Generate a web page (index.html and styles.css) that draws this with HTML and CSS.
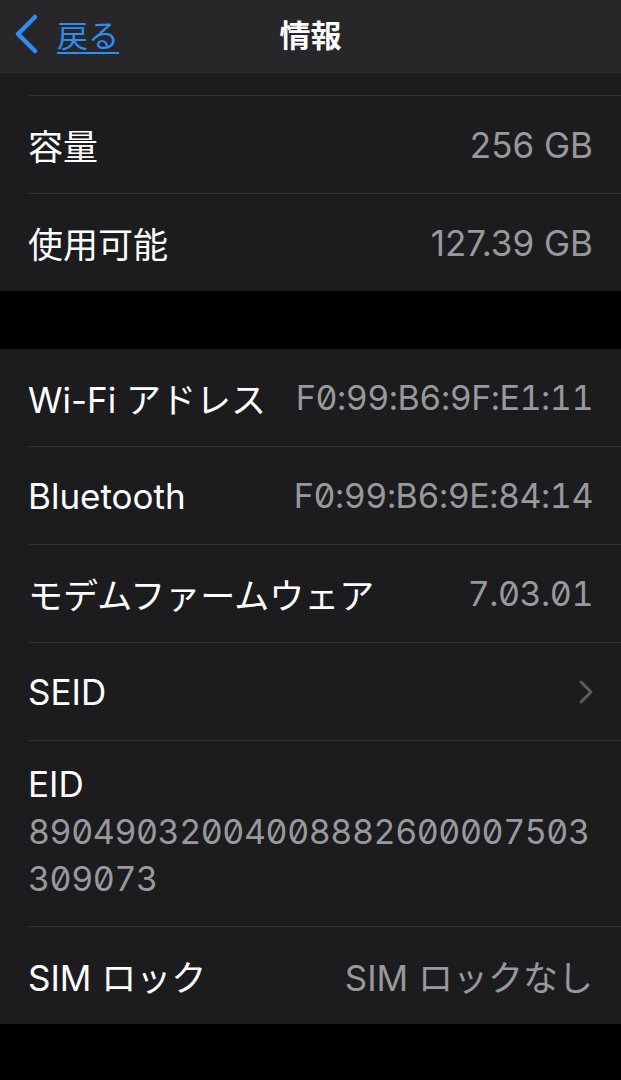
FILE: index.html
```html
<!DOCTYPE html>
<html lang="ja">
  <head>
    <meta charset="UTF-8" />
    <meta name="viewport" content="width=device-width, initial-scale=1.0" />
    <title>情報</title>
    <link rel="stylesheet" href="styles.css">
  </head>
  <body>
    <!-- Navigation bar -->
    <header class="navbar">
      <a class="back" href="#">
        <svg class="back-icon" width="26" height="40" viewBox="0 0 26 40">
          <path d="M21 3 L4 20 L21 37" fill="none" stroke="#2f8cf0" stroke-width="4.5" stroke-linecap="round" stroke-linejoin="round" />
        </svg>
        <span class="back-label">戻る</span>
      </a>
      <h1 class="title">情報</h1>
    </header>

    <!-- Storage -->
    <section class="group">
      <div class="row-cut"></div>
      <div class="row">
        <span class="label">容量</span>
        <span class="value">256 GB</span>
      </div>
      <div class="row">
        <span class="label">使用可能</span>
        <span class="value">127.39 GB</span>
      </div>
    </section>

    <!-- Network / hardware -->
    <section class="group">
      <div class="row">
        <span class="label">Wi-Fi アドレス</span>
        <span class="value mono">F0:99:B6:9F:E1:11</span>
      </div>
      <div class="row">
        <span class="label">Bluetooth</span>
        <span class="value mono">F0:99:B6:9E:84:14</span>
      </div>
      <div class="row">
        <span class="label">モデムファームウェア</span>
        <span class="value mono">7.03.01</span>
      </div>
      <div class="row">
        <span class="label">SEID</span>
        <svg class="disclosure" width="16" height="26" viewBox="0 0 16 26">
          <path d="M3 3 L13 13 L3 23" fill="none" stroke="#5c5c60" stroke-width="3" stroke-linecap="round" stroke-linejoin="round" />
        </svg>
      </div>
      <div class="row row-stack">
        <span class="label">EID</span>
        <span class="value mono">89049032004008882600007503<br />309073</span>
      </div>
      <div class="row">
        <span class="label">SIM ロック</span>
        <span class="value">SIM ロックなし</span>
      </div>
    </section>
  </body>
</html>
```

FILE: styles.css
```css
body {
  margin: 0;
  padding: 0;
  background-color: #000;
  color: #fff;
  font-family: Inter, "Noto Sans CJK JP", sans-serif;
  font-size: 35px;
}
.navbar {
  position: relative;
  display: flex;
  align-items: center;
  height: 67px;
  padding-bottom: 6px;
  background-color: #272729;
  border-bottom: 1px solid #1f1f21;
}
.back {
  display: flex;
  align-items: center;
  gap: 17px;
  margin-left: 14px;
  color: #2f8cf0;
  text-decoration: none;
}
.back-label {
  font-size: 31px;
  text-decoration: underline;
  text-underline-offset: 5px;
  text-decoration-thickness: 2px;
}
.title {
  position: absolute;
  left: 0;
  right: 0;
  margin: 0;
  text-align: center;
  font-size: 31px;
  font-weight: bold;
  pointer-events: none;
}
.group {
  background-color: #1c1c1e;
  padding-left: 28px;
  margin-bottom: 58px;
}
.row-cut {
  height: 21px;
  border-bottom: 1px solid #333336;
}
.row {
  display: flex;
  align-items: center;
  justify-content: space-between;
  height: 97px;
  padding-right: 28px;
  border-bottom: 1px solid #333336;
}
.row:last-child {
  border-bottom: none;
}
.label {
  white-space: nowrap;
}
.value {
  color: #98989d;
  white-space: nowrap;
}
.mono {
  font-size: 34px;
  letter-spacing: -0.45px;
  font-variant-numeric: tabular-nums slashed-zero;
}
.disclosure {
  margin-right: -1px;
}
.row-stack {
  flex-direction: column;
  align-items: flex-start;
  justify-content: flex-start;
  height: auto;
  padding-top: 20px;
  padding-bottom: 24px;
  line-height: 47px;
}
```
